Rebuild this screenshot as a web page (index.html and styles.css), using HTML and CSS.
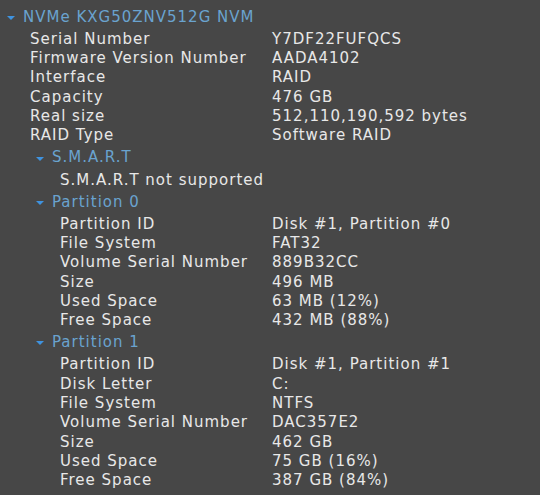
FILE: index.html
```html
<!DOCTYPE html>
<html>
<head>
<meta charset="utf-8">
<link rel="stylesheet" href="styles.css">
</head>
<body>
<div class="tree">
  <div class="node">
    <div class="head top"><span class="arrow"></span>NVMe KXG50ZNV512G NVM</div>
    <div class="props l1">
      <div class="row"><span class="k">Serial Number</span><span class="v">Y7DF22FUFQCS</span></div>
      <div class="row"><span class="k">Firmware Version Number</span><span class="v">AADA4102</span></div>
      <div class="row"><span class="k">Interface</span><span class="v">RAID</span></div>
      <div class="row"><span class="k">Capacity</span><span class="v">476 GB</span></div>
      <div class="row"><span class="k">Real size</span><span class="v">512,110,190,592 bytes</span></div>
      <div class="row"><span class="k">RAID Type</span><span class="v">Software RAID</span></div>
    </div>
    <div class="node sub">
      <div class="head"><span class="arrow"></span>S.M.A.R.T</div>
      <div class="props l2">
        <div class="row"><span class="k wide">S.M.A.R.T not supported</span></div>
      </div>
    </div>
    <div class="node sub">
      <div class="head"><span class="arrow"></span>Partition 0</div>
      <div class="props l2">
        <div class="row"><span class="k">Partition ID</span><span class="v">Disk #1, Partition #0</span></div>
        <div class="row"><span class="k">File System</span><span class="v">FAT32</span></div>
        <div class="row"><span class="k">Volume Serial Number</span><span class="v">889B32CC</span></div>
        <div class="row"><span class="k">Size</span><span class="v">496 MB</span></div>
        <div class="row"><span class="k">Used Space</span><span class="v">63 MB (12%)</span></div>
        <div class="row"><span class="k">Free Space</span><span class="v">432 MB (88%)</span></div>
      </div>
    </div>
    <div class="node sub">
      <div class="head"><span class="arrow"></span>Partition 1</div>
      <div class="props l2">
        <div class="row"><span class="k">Partition ID</span><span class="v">Disk #1, Partition #1</span></div>
        <div class="row"><span class="k">Disk Letter</span><span class="v">C:</span></div>
        <div class="row"><span class="k">File System</span><span class="v">NTFS</span></div>
        <div class="row"><span class="k">Volume Serial Number</span><span class="v">DAC357E2</span></div>
        <div class="row"><span class="k">Size</span><span class="v">462 GB</span></div>
        <div class="row"><span class="k">Used Space</span><span class="v">75 GB (16%)</span></div>
        <div class="row"><span class="k">Free Space</span><span class="v">387 GB (84%)</span></div>
      </div>
    </div>
  </div>
</div>
</body>
</html>
```
FILE: styles.css
```css
html, body {
  margin: 0;
  padding: 0;
  background: #474747;
}
body {
  width: 540px;
  height: 495px;
  overflow: hidden;
  font-family: "DejaVu Sans", Verdana, sans-serif;
  font-size: 15px;
  letter-spacing: 1px;
  color: #e8e8e8;
}
.tree {
  padding-top: 5px;
}
.head {
  display: flex;
  align-items: center;
  line-height: 19.35px;
  padding: 2.7px 0;
  color: #6aa3cf;
}
.head.top {
  padding-left: 7px;
}
.sub > .head {
  padding-left: 36px;
}
.arrow {
  width: 0;
  height: 0;
  border-left: 4.5px solid transparent;
  border-right: 4.5px solid transparent;
  border-top: 4.5px solid #3f93e0;
  margin-right: 8px;
  margin-top: 1px;
}
.row {
  display: flex;
  line-height: 19.35px;
  white-space: nowrap;
}
.l1 .row { padding-left: 30px; }
.l2 .row { padding-left: 60px; }
.l1 .k { width: 242px; }
.l2 .k { width: 212px; }
.k.wide { width: auto; }
```
